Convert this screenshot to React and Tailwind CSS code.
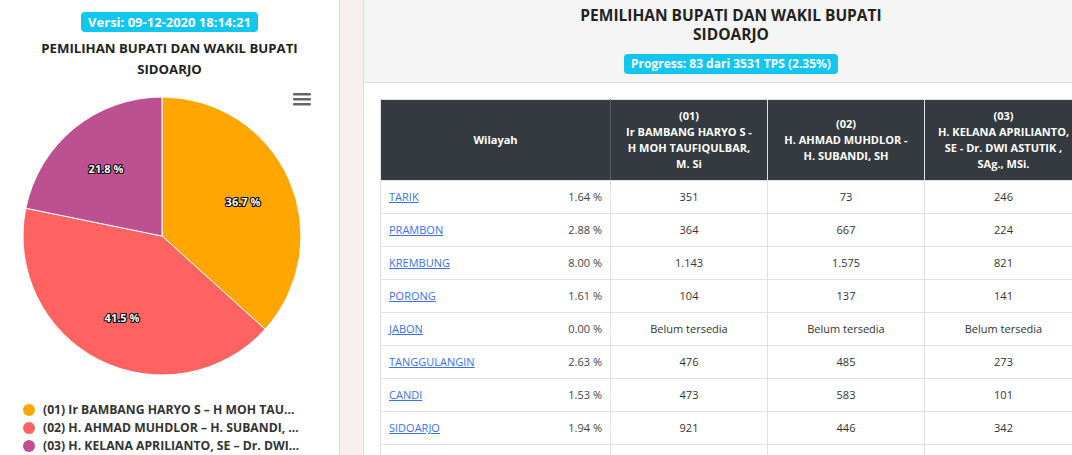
import React from "react";

const candidates = [
  { no: "01", color: "#ffa600", legend: "(01) Ir BAMBANG HARYO S – H MOH TAUFIQULBAR, M. Si", lines: ["Ir BAMBANG HARYO S -", "H MOH TAUFIQULBAR,", "M. Si"] },
  { no: "02", color: "#ff6361", legend: "(02) H. AHMAD MUHDLOR – H. SUBANDI, SH, M.Hum", lines: ["H. AHMAD MUHDLOR -", "H. SUBANDI, SH"] },
  { no: "03", color: "#bc5090", legend: "(03) H. KELANA APRILIANTO, SE – Dr. DWI ASTUTIK , SAg., MSi.", lines: ["H. KELANA APRILIANTO,", "SE - Dr. DWI ASTUTIK ,", "SAg., MSi."] },
];

const rows = [
  { name: "TARIK", pct: "1.64 %", v: ["351", "73", "246"] },
  { name: "PRAMBON", pct: "2.88 %", v: ["364", "667", "224"] },
  { name: "KREMBUNG", pct: "8.00 %", v: ["1.143", "1.575", "821"] },
  { name: "PORONG", pct: "1.61 %", v: ["104", "137", "141"] },
  { name: "JABON", pct: "0.00 %", v: ["Belum tersedia", "Belum tersedia", "Belum tersedia"] },
  { name: "TANGGULANGIN", pct: "2.63 %", v: ["476", "485", "273"] },
  { name: "CANDI", pct: "1.53 %", v: ["473", "583", "101"] },
  { name: "SIDOARJO", pct: "1.94 %", v: ["921", "446", "342"] },
  { name: "BUDURAN", pct: "2.10 %", v: ["512", "398", "207"] },
];

const slices = [36.7, 41.5, 21.8];

const PieChart = () => {
  const cx = 162;
  const cy = 146;
  const r = 139;
  let start = 0;
  const point = (deg) => {
    const a = ((deg - 90) * Math.PI) / 180;
    return [cx + r * Math.cos(a), cy + r * Math.sin(a)];
  };
  const labels = [
    { text: "36.7 %", x: 243, y: 113 },
    { text: "41.5 %", x: 122, y: 229 },
    { text: "21.8 %", x: 106, y: 80 },
  ];

  return (
    <svg width="339" height="290" viewBox="0 0 339 290" className="block">
      {slices.map((s, i) => {
        const end = start + (s / 100) * 360;
        const [x1, y1] = point(start);
        const [x2, y2] = point(end);
        const large = end - start > 180 ? 1 : 0;
        const d = `M ${cx} ${cy} L ${x1} ${y1} A ${r} ${r} 0 ${large} 1 ${x2} ${y2} Z`;
        start = end;
        return <path key={i} d={d} fill={candidates[i].color} stroke="#fff" strokeWidth="1" />;
      })}
      {labels.map((l) => (
        <text
          key={l.text}
          x={l.x}
          y={l.y}
          textAnchor="middle"
          dominantBaseline="middle"
          fontSize="11"
          fontWeight="700"
          fill="#fff"
          stroke="#000"
          strokeWidth="2.2"
          strokeLinejoin="round"
          style={{ paintOrder: "stroke" }}
        >
          {l.text}
        </text>
      ))}
      {/* context menu button */}
      <g fill="#666">
        <rect x="293" y="3" width="18" height="2.5" rx="1" />
        <rect x="293" y="8" width="18" height="2.5" rx="1" />
        <rect x="293" y="13" width="18" height="2.5" rx="1" />
      </g>
    </svg>
  );
};

export default function App() {
  return (
    <div className="w-[1072px] h-[455px] overflow-hidden bg-white font-['Open_Sans','Noto_Sans',sans-serif] text-[#212529]">
      <div className="flex w-[1099px] h-full">
        {/* Left chart panel */}
        <div className="w-[340px] shrink-0 border-r border-[#dcdcdc] bg-white flex flex-col">
          <div className="flex justify-center pt-3 shrink-0">
            <span className="bg-[#13c6ee] text-white font-bold text-[13px] leading-[20px] px-[7px] rounded-[4px]">
              Versi: 09-12-2020 18:14:21
            </span>
          </div>
          <h2 className="mt-[6px] shrink-0 text-center font-bold text-[13.2px] leading-[21px] text-[#222]">
            PEMILIHAN BUPATI DAN WAKIL BUPATI
            <br />
            SIDOARJO
          </h2>
          <div className="mt-[10px] shrink-0">
            <PieChart />
          </div>
          <div className="mt-[21px] pl-[23px] flex flex-col shrink-0">
            {candidates.map((c) => (
              <div key={c.no} className="flex items-center gap-[8px] h-[18px]">
                <span className="w-[12px] h-[12px] rounded-full shrink-0" style={{ backgroundColor: c.color }} />
                <span className="truncate max-w-[257px] text-[12.2px] font-bold text-[#333]">{c.legend}</span>
              </div>
            ))}
          </div>
        </div>

        {/* Divider strip */}
        <div className="w-[24px] shrink-0 bg-[#f6f1ee] border-r border-[#dcdcdc]" />

        {/* Right table panel */}
        <div className="w-[734px] shrink-0 flex flex-col">
          <div className="h-[83px] shrink-0 bg-[#f5f5f5] border-b border-[#dcdcdc] flex flex-col items-center pt-[6px]">
            <h1 className="text-center font-bold text-[15.5px] leading-[18.5px] text-[#222]">
              PEMILIHAN BUPATI DAN WAKIL BUPATI
              <br />
              SIDOARJO
            </h1>
            <span className="mt-[11px] bg-[#13c6ee] text-white font-bold text-[12px] leading-[20px] px-[7px] rounded-[4px]">
              Progress: 83 dari 3531 TPS (2.35%)
            </span>
          </div>
          <div className="px-[16px] pt-[16px] shrink-0">
            <table className="w-[702px] table-fixed border-collapse text-[11px]">
              <colgroup>
                <col className="w-[230px]" />
                <col className="w-[157px]" />
                <col className="w-[157px]" />
                <col className="w-[158px]" />
              </colgroup>
              <thead>
                <tr className="bg-[#343a40] text-white">
                  <th className="h-[81px] border border-[#dee2e6] border-r-[#5a5f64] font-bold text-center align-middle">
                    Wilayah
                  </th>
                  {candidates.map((c) => (
                    <th
                      key={c.no}
                      className="border border-[#dee2e6] border-l-[#5a5f64] font-bold text-center align-middle leading-[16px] px-1"
                    >
                      ({c.no})
                      {c.lines.map((l) => (
                        <React.Fragment key={l}>
                          <br />
                          {l}
                        </React.Fragment>
                      ))}
                    </th>
                  ))}
                </tr>
              </thead>
              <tbody>
                {rows.map((row) => (
                  <tr key={row.name} className="h-[33px]">
                    <td className="border border-[#dee2e6] px-[8px]">
                      <div className="flex justify-between items-center">
                        <a href="#" className="text-[#3872f0] underline">
                          {row.name}
                        </a>
                        <span className="text-[#444]">{row.pct}</span>
                      </div>
                    </td>
                    {row.v.map((v, i) => (
                      <td key={i} className="border border-[#dee2e6] text-center text-[#333]">
                        {v}
                      </td>
                    ))}
                  </tr>
                ))}
              </tbody>
            </table>
          </div>
        </div>
      </div>
    </div>
  );
}
